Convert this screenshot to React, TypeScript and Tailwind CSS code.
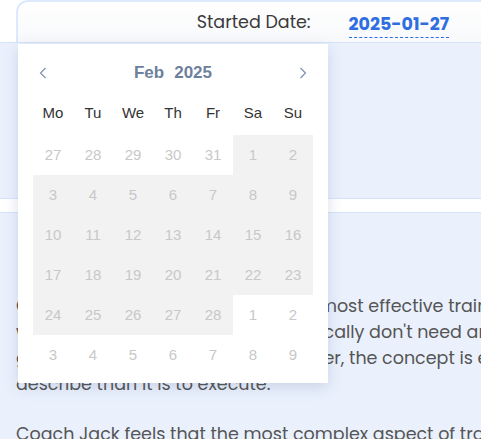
import React from 'react';

const weekDays = ['Mo', 'Tu', 'We', 'Th', 'Fr', 'Sa', 'Su'];

// 6 rows of the Feb 2025 view, flag = disabled (grey background)
const rows: [number, boolean][][] = [
  [[27, false], [28, false], [29, false], [30, false], [31, false], [1, true], [2, true]],
  [[3, true], [4, true], [5, true], [6, true], [7, true], [8, true], [9, true]],
  [[10, true], [11, true], [12, true], [13, true], [14, true], [15, true], [16, true]],
  [[17, true], [18, true], [19, true], [20, true], [21, true], [22, true], [23, true]],
  [[24, true], [25, true], [26, true], [27, true], [28, true], [1, false], [2, false]],
  [[3, false], [4, false], [5, false], [6, false], [7, false], [8, false], [9, false]],
];

function DatePopup() {
  return (
    <div className="absolute left-[18px] top-[44px] w-[310px] bg-white px-[15px] pt-[9px] pb-[8px] shadow-[0_4px_14px_rgba(60,80,120,0.18)] font-['Liberation_Sans',Arial,sans-serif]">
      <div className="h-10 flex items-center justify-between px-[6px]">
        <svg width="8" height="12" viewBox="0 0 8 12" fill="none" stroke="#7f92ab" strokeWidth="1.2">
          <path d="M6.5 1L1.5 6l5 5" />
        </svg>
        <div className="text-[17px] font-semibold text-[#6d819c] flex gap-[10px]">
          <span>Feb</span>
          <span>2025</span>
        </div>
        <svg width="8" height="12" viewBox="0 0 8 12" fill="none" stroke="#7f92ab" strokeWidth="1.2">
          <path d="M1.5 1l5 5-5 5" />
        </svg>
      </div>
      <div className="grid grid-cols-7 h-10 items-center text-[15px] text-[#333]">
        {weekDays.map((d) => (
          <div key={d} className="text-center">{d}</div>
        ))}
      </div>
      <div className="mt-[2px]">
        {rows.map((row, i) => (
          <div key={i} className="grid grid-cols-7">
            {row.map(([n, off], j) => (
              <div
                key={j}
                className={`h-10 flex items-center justify-center text-[15px] text-[#c8c8c8] ${off ? 'bg-[#f2f2f2]' : 'bg-white'}`}
              >
                {n}
              </div>
            ))}
          </div>
        ))}
      </div>
    </div>
  );
}

export default function App() {
  return (
    <div className="relative w-[481px] h-[439px] overflow-hidden bg-white font-['Poppins','Open_Sans',sans-serif]">
      {/* header card */}
      <div className="h-[43px] pl-4 border-b border-[#d6e4fb]">
        <div className="h-full border-l-2 border-t-2 border-[#dde9fc] rounded-tl-[12px] bg-gradient-to-b from-white to-[#f8f9fb] flex items-center justify-end pr-[32px]">
          <span className="text-[17.5px] text-[#3a3a3a] mr-[38px]">Started Date:</span>
          <span className="text-[17.5px] font-bold text-[#2f6ee0] border-b border-dashed border-[#2f6ee0] leading-[22px] pb-[2px] mt-[6px]">
            2025-01-27
          </span>
        </div>
      </div>

      {/* first section */}
      <div className="h-[156px] bg-[#eaf1fd] border-b border-[#d6e4fb]"></div>

      {/* second section */}
      <div className="mt-[13px] bg-[#eaf1fd] border-t border-[#d6e4fb] px-4 pt-[80px] h-[300px] text-[17.5px] leading-[26px] text-[#555] overflow-hidden">
        <div className="whitespace-nowrap">
          <div>Coach Jo says fartlek is one of the most effective training methods</div>
          <div>workouts for a runner, and you basically don't need any</div>
          <div>gear or any machines at all. However, the concept is easier to</div>
          <div>describe than it is to execute.</div>
        </div>
        <div className="whitespace-nowrap mt-[24px]">
          Coach Jack feels that the most complex aspect of training
        </div>
      </div>

      <DatePopup />
    </div>
  );
}
